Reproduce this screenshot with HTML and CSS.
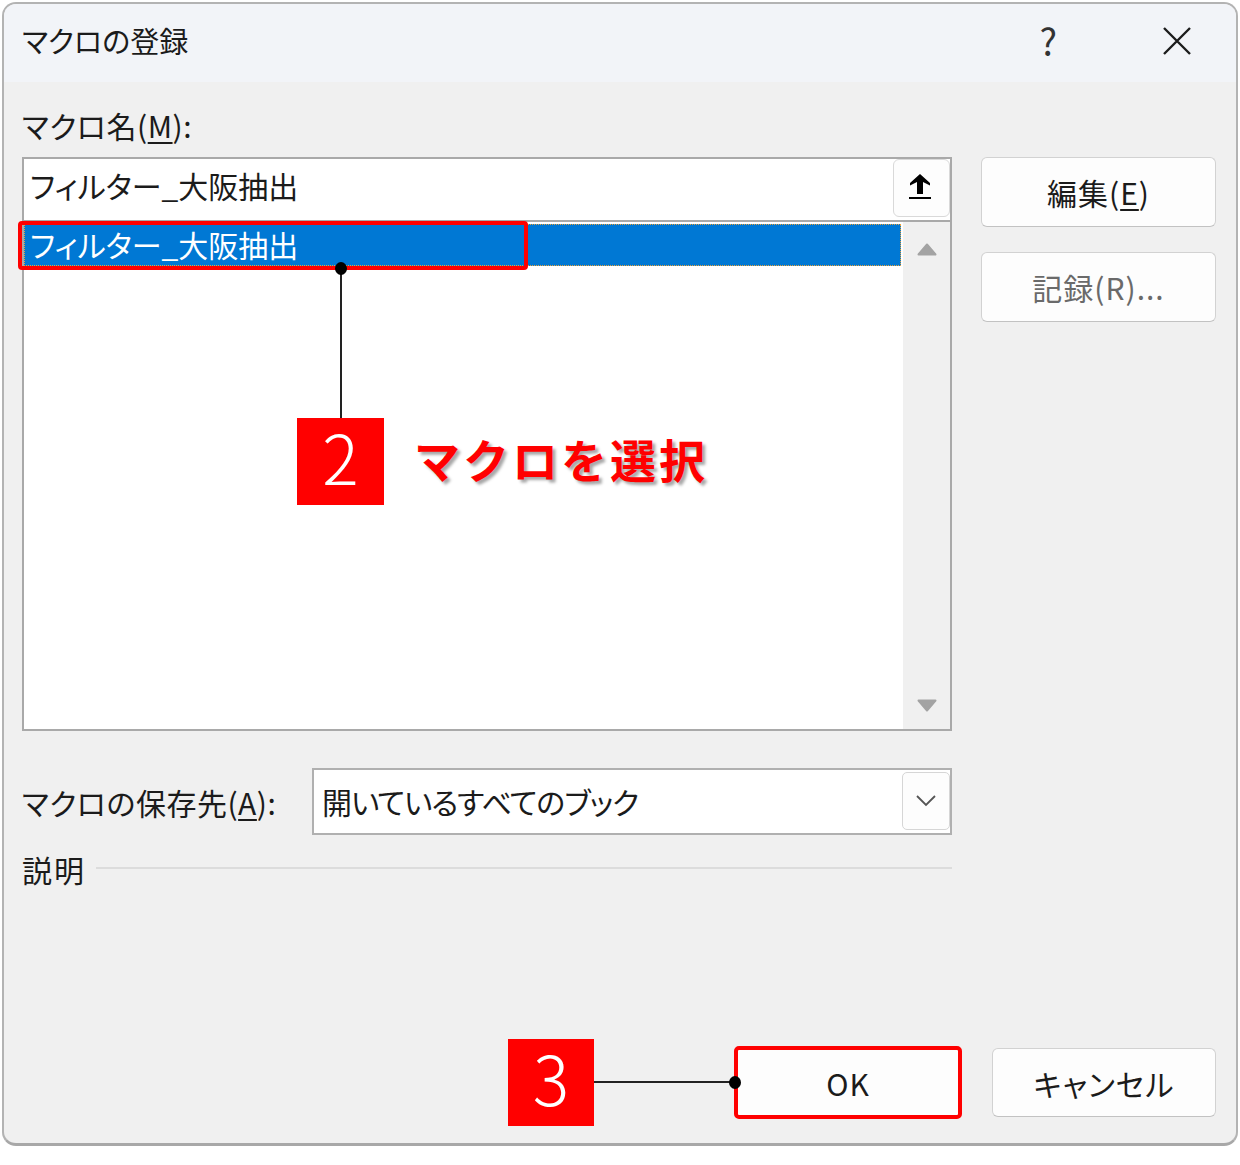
FILE: index.html
```html
<!DOCTYPE html>
<html lang="ja">
<head>
<meta charset="utf-8">
<title>マクロの登録</title>
<link rel="stylesheet" href="styles.css">
</head>
<body>
<div class="dialog">
  <div class="titlebar">
    <div class="title">マクロの登録</div>
    <div class="title-actions">
      <span class="help">?</span>
      <svg class="close" viewBox="0 0 30 30" width="30" height="30"><path d="M2 2L28 28M28 2L2 28"/></svg>
    </div>
  </div>
  <div class="content">
    <div class="main">
      <div class="left">
        <div class="label name-label">マクロ名(<u>M</u>):</div>
        <div class="namebox">
          <div class="name-input">フィルター_大阪抽出</div>
          <button class="pick">
            <svg viewBox="0 0 24 26" width="24" height="26"><polygon points="12,0 22,9 22,11.5 15,8 15,20 9,20 9,8 2,11.5 2,9"/><rect x="1" y="23" width="22" height="2"/></svg>
          </button>
        </div>
        <div class="list">
          <div class="items">
            <div class="item selected">フィルター_大阪抽出</div>
          </div>
          <div class="scrollbar">
            <svg class="tri" viewBox="0 0 20 13" width="20" height="13"><path d="M10 1.5L18.5 11.5H1.5Z" stroke-linejoin="round"/></svg>
            <svg class="tri" viewBox="0 0 20 13" width="20" height="13"><path d="M10 11.5L18.5 1.5H1.5Z" stroke-linejoin="round"/></svg>
          </div>
        </div>
        <div class="store-row">
          <div class="label store-label">マクロの保存先(<u>A</u>):</div>
          <div class="combo">
            <span class="combo-text">開いているすべてのブック</span>
            <span class="drop"><svg viewBox="0 0 20 12" width="20" height="12"><path d="M1 1L10 10L19 1"/></svg></span>
          </div>
        </div>
        <div class="desc-row"><span class="desc-label">説明</span><span class="rule"></span></div>
      </div>
      <div class="right">
        <button class="btn">編集(<u>E</u>)</button>
        <button class="btn disabled">記録(R)...</button>
      </div>
    </div>
    <div class="footer">
      <button class="btn ok">OK</button>
      <button class="btn">キャンセル</button>
    </div>
  </div>
</div>

<div class="annot hl"></div>
<div class="annot vline"></div>
<div class="annot dot dot2"></div>
<div class="annot badge badge2">2</div>
<div class="annot callout">マクロを選択</div>
<div class="annot badge badge3">3</div>
<div class="annot hline"></div>
<div class="annot dot dot3"></div>
</body>
</html>
```

FILE: styles.css
```css
* { box-sizing: border-box; }
body {
  margin: 0;
  background: #fff;
  width: 1240px;
  height: 1165px;
  position: relative;
  font-family: "Noto Sans CJK JP", "Noto Sans", sans-serif;
  font-feature-settings: "palt";
  color: #1b1b1b;
  overflow: hidden;
}
button { font-family: inherit; font-feature-settings: "palt"; }
u { text-decoration-thickness: 2px; text-underline-offset: 4px; }

.dialog {
  margin: 2px 0 0 2px;
  width: 1236px;
  height: 1144px;
  border: 2px solid #b3b3b3;
  border-bottom-width: 3px;
  border-bottom-color: #a8a8a8;
  border-radius: 14px;
  background: #f0f0f0;
  overflow: hidden;
  display: flex;
  flex-direction: column;
}
.titlebar {
  height: 78px;
  flex: none;
  background: #f2f4f8;
  display: flex;
  align-items: center;
  justify-content: space-between;
  padding: 0 44px 6px 18px;
}
.title { font-size: 29px; line-height: 40px; }
.title-actions { display: flex; align-items: center; gap: 105px; }
.help { font-size: 37px; font-weight: 400; color: #333; line-height: 40px; }
.close { fill: none; stroke: #1c1c1c; stroke-width: 2.4; display: block; margin-top: 2px; }

.content {
  flex: 1;
  display: flex;
  flex-direction: column;
  padding: 0 20px 26px 18px;
}
.main { display: flex; gap: 29px; }
.left { width: 930px; }
.right {
  width: 235px;
  padding-top: 75px;
  display: flex;
  flex-direction: column;
  gap: 25px;
}

.label { font-size: 30px; white-space: nowrap; }
.name-label { margin-top: 22px; height: 44px; line-height: 42px; margin-bottom: 9px; letter-spacing: 0.5px; }

.namebox {
  height: 63px;
  border: 2px solid #a9a9a9;
  border-bottom: none;
  background: #fff;
  display: flex;
  align-items: flex-start;
}
.name-input {
  flex: 1;
  font-size: 30px;
  line-height: 52px;
  padding-left: 6px;
  white-space: nowrap;
}
.pick {
  width: 57px;
  height: 58px;
  margin: 0;
  padding: 0;
  border: 1px solid #d9d9d9;
  border-radius: 6px;
  background: #fdfdfd;
  display: flex;
  align-items: center;
  justify-content: center;
}
.pick svg { fill: #000; display: block; margin: 0 4px 2px 0; }

.list {
  height: 511px;
  border: 2px solid #a9a9a9;
  background: #fff;
  display: flex;
}
.items { flex: 1; padding-top: 2px; }
.item {
  height: 42px;
  margin-right: 2px;
  padding-left: 5px;
  font-size: 30px;
  line-height: 38px;
  white-space: nowrap;
}
.item.selected {
  background: #0078d4;
  color: #fff;
  border: 1px dotted #e8a23a;
}
.scrollbar {
  width: 47px;
  background: #f0f0f0;
  display: flex;
  flex-direction: column;
  justify-content: space-between;
  align-items: center;
  padding: 21px 0 17px;
}
.tri { display: block; fill: #a3a3a3; stroke: #a3a3a3; stroke-width: 2; }

.store-row {
  margin-top: 37px;
  display: flex;
  align-items: center;
}
.store-label { width: 290px; line-height: 44px; letter-spacing: 0.5px; }
.combo {
  width: 640px;
  height: 67px;
  border: 2px solid #b0b0b0;
  background: #fff;
  display: flex;
  align-items: flex-start;
}
.combo-text {
  flex: 1;
  font-size: 30px;
  line-height: 62px;
  padding-left: 8px;
  white-space: nowrap;
  letter-spacing: -1px;
}
.drop {
  width: 48px;
  height: 58px;
  margin-top: 2px;
  border: 1px solid #d6d6d6;
  border-radius: 5px;
  background: #fdfdfd;
  display: flex;
  align-items: center;
  justify-content: center;
}
.drop svg { fill: none; stroke: #555; stroke-width: 1.8; display: block; }

.desc-row {
  margin-top: 17px;
  height: 34px;
  display: flex;
  align-items: center;
  gap: 10px;
}
.desc-label { font-size: 30px; line-height: 32px; letter-spacing: 2px; }
.rule { flex: 1; height: 2px; background: #dcdcdc; margin-top: -2px; }

.btn {
  width: 235px;
  height: 70px;
  margin: 0;
  padding: 0;
  background: #fdfdfd;
  border: 1px solid #d2d2d2;
  border-bottom-color: #c2c2c2;
  border-radius: 6px;
  font-size: 30px;
  color: #1b1b1b;
  letter-spacing: 1px;
}
.btn.disabled { color: #6a6a6a; }

.footer {
  margin-top: auto;
  display: flex;
  justify-content: flex-end;
  gap: 32px;
}
.footer .btn { width: 224px; height: 69px; }
.btn.ok {
  outline: 4px solid #ff0000;
  outline-offset: -2px;
  border-radius: 3px;
}

/* annotation overlays */
.annot { position: absolute; }
.hl {
  left: 18px;
  top: 221px;
  width: 510px;
  height: 49px;
  border: 4px solid #ff0000;
  border-radius: 4px;
}
.vline { left: 340px; top: 268px; width: 1.5px; height: 150px; background: #222; }
.hline { left: 594px; top: 1081px; width: 141px; height: 1.5px; background: #222; }
.dot { width: 12px; height: 13px; border-radius: 50%; background: #000; }
.dot2 { left: 335px; top: 262px; }
.dot3 { left: 729px; top: 1076px; }
.badge {
  width: 87px;
  height: 87px;
  padding-bottom: 12px;
  background: #ff0000;
  color: #fff;
  font-size: 68px;
  font-weight: 300;
  display: flex;
  align-items: center;
  justify-content: center;
  line-height: 1;
  font-feature-settings: normal;
}
.badge2 { left: 297px; top: 418px; }
.badge3 { left: 508px; top: 1039px; width: 86px; }
.callout {
  left: 414px;
  top: 428px;
  font-size: 46px;
  font-weight: 700;
  color: #ff0000;
  letter-spacing: 3px;
  line-height: 60px;
  white-space: nowrap;
  font-feature-settings: normal;
  text-shadow: 3px 3px 3px rgba(0, 0, 0, 0.35);
}
```
